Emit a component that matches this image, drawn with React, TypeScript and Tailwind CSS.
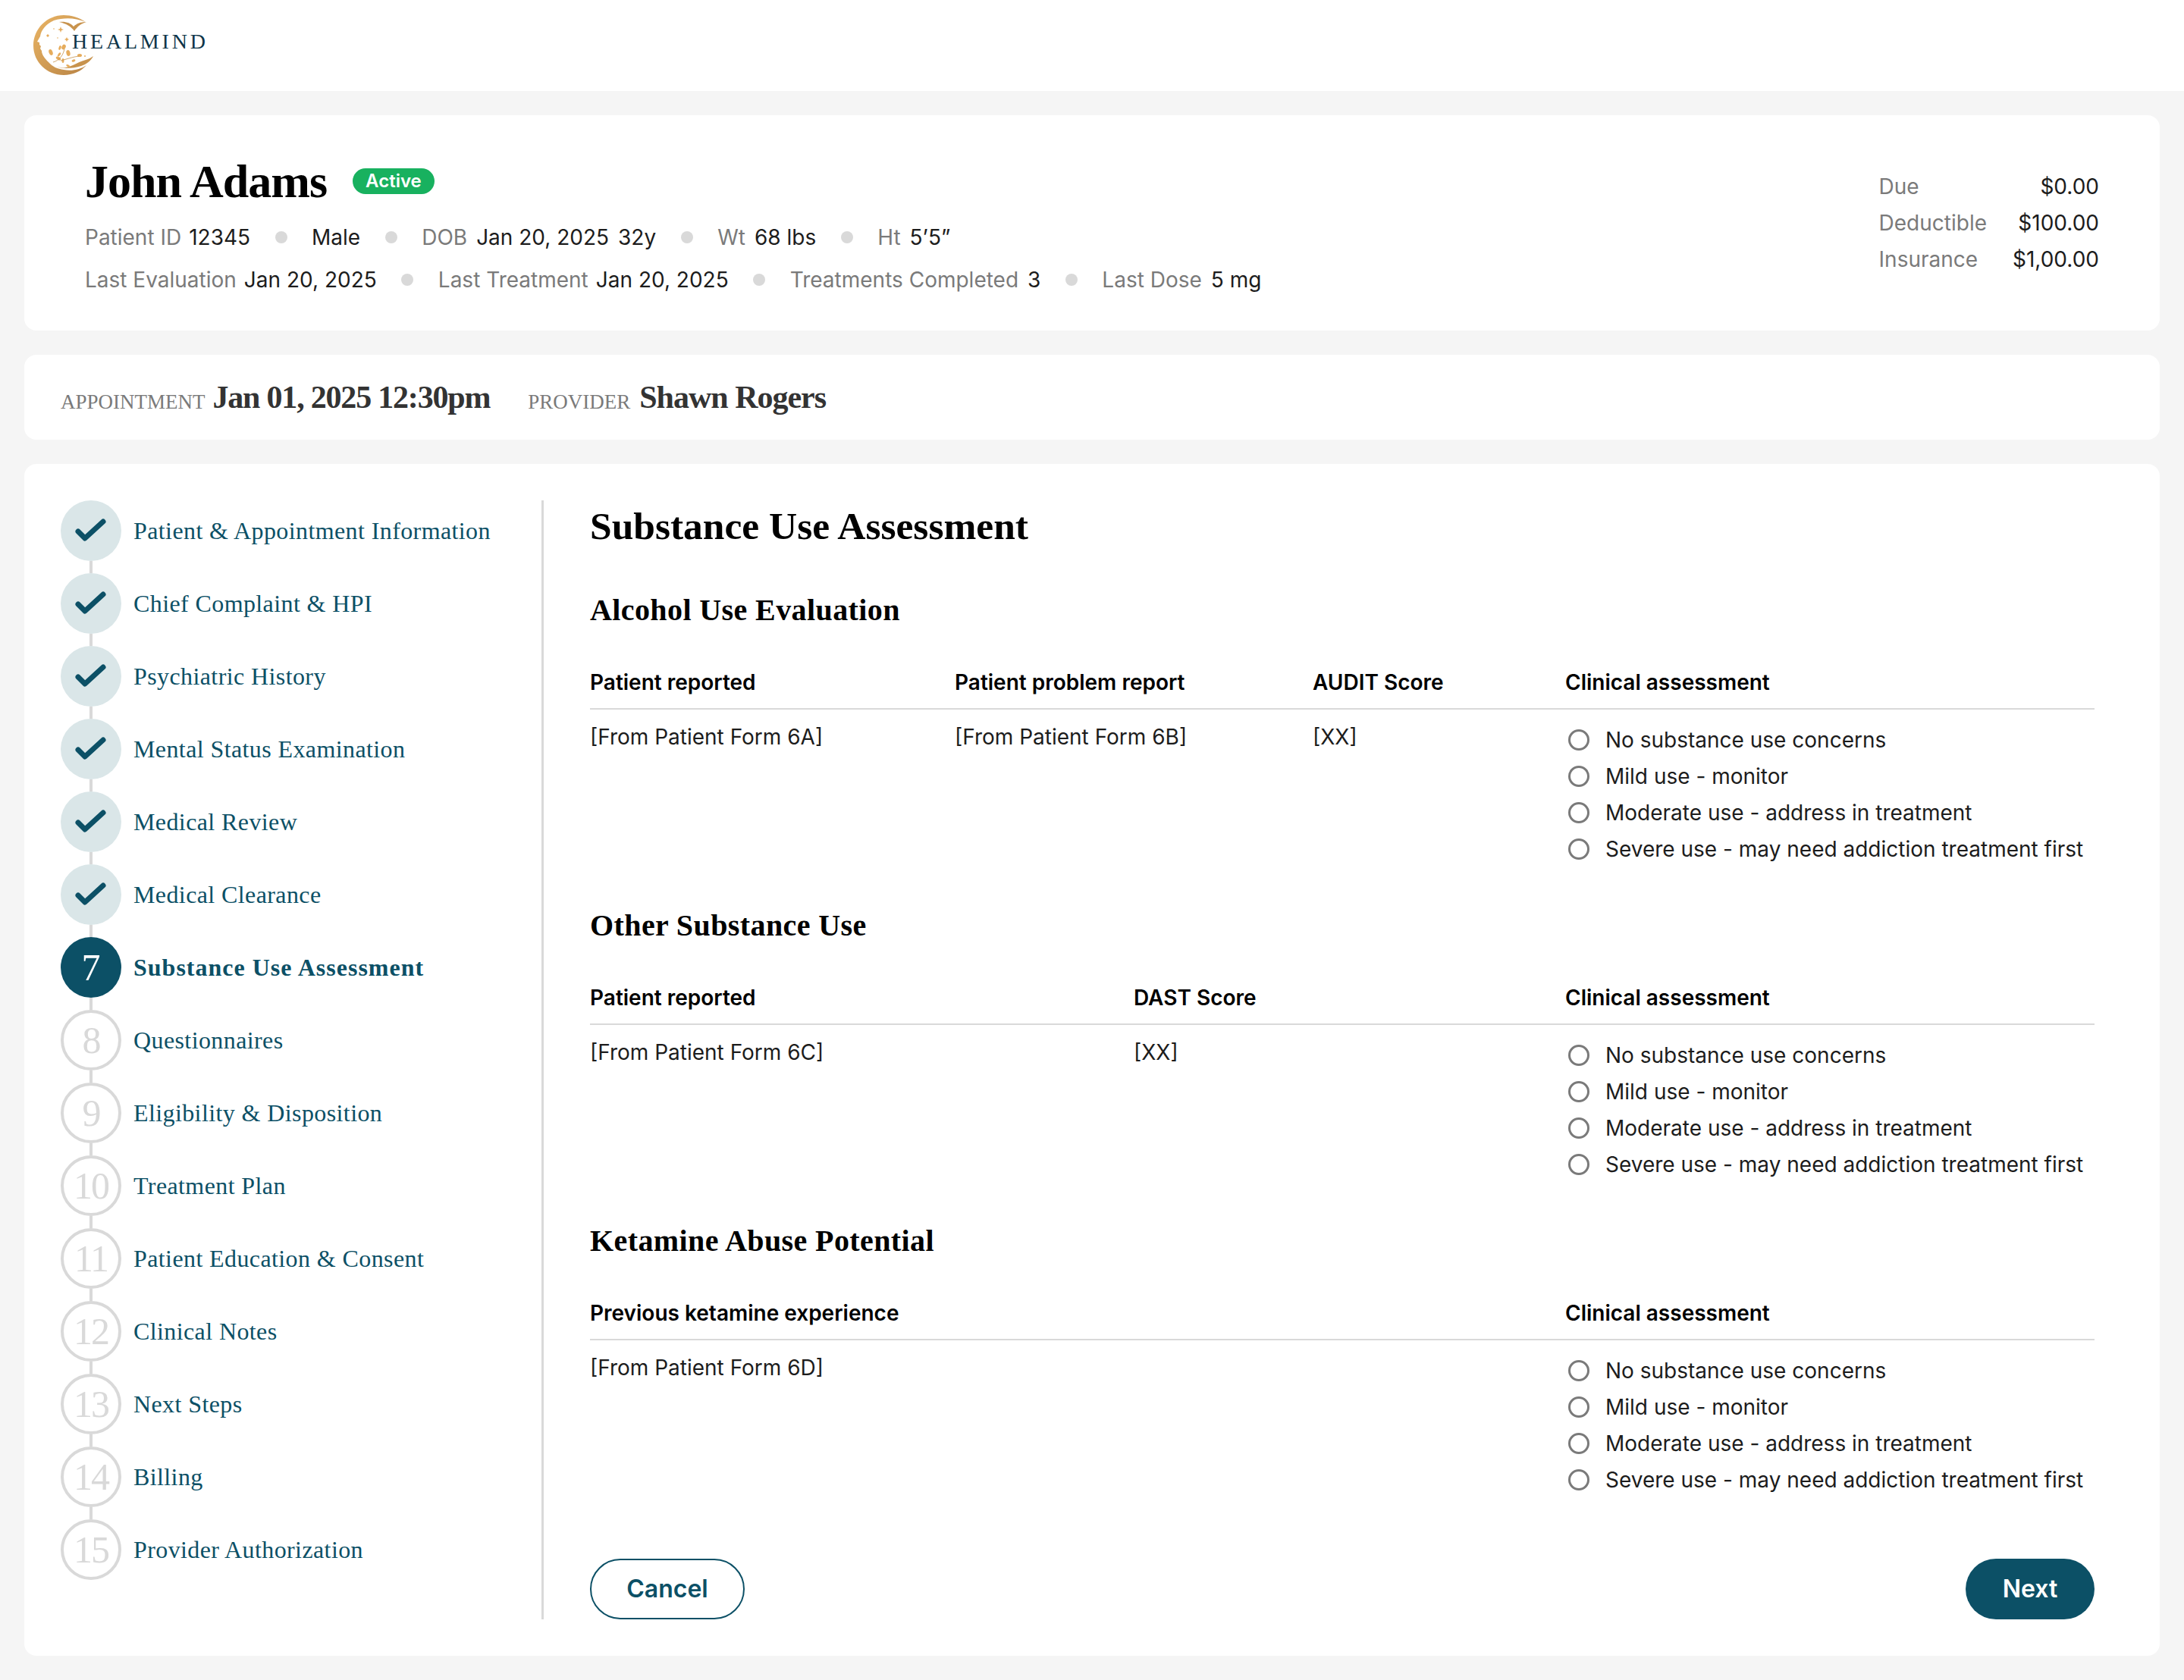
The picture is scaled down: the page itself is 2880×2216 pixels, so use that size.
const SERIF = "font-['Liberation_Serif',serif]";

const steps = [
  "Patient & Appointment Information",
  "Chief Complaint & HPI",
  "Psychiatric History",
  "Mental Status Examination",
  "Medical Review",
  "Medical Clearance",
  "Substance Use Assessment",
  "Questionnaires",
  "Eligibility & Disposition",
  "Treatment Plan",
  "Patient Education & Consent",
  "Clinical Notes",
  "Next Steps",
  "Billing",
  "Provider Authorization",
];

const ACTIVE_STEP = 7;

const assessmentOptions = [
  "No substance use concerns",
  "Mild use - monitor",
  "Moderate use - address in treatment",
  "Severe use - may need addiction treatment first",
];

const Logo = () => (
  <div className="relative w-[240px] h-[80px]">
    <svg width="84" height="84" viewBox="0 0 84 84" className="absolute left-0 top-0">
      <defs>
        <linearGradient id="gold" x1="0" y1="0" x2="1" y2="1">
          <stop offset="0" stopColor="#eab565" />
          <stop offset="1" stopColor="#b98445" />
        </linearGradient>
      </defs>
      {/* crescent with the face profile as its inner edge */}
      <path
        fill="url(#gold)"
        d="M69 9C60 3 50 0 40 0C18 0 0 18 0 40C0 62 18 79 40 79C52 79 63 74 70 66C62 72 50 74 40 72C32 71 25 68 20 62C15 57 11 52 11 47L9 44L10 41L8 39L8 36L5 35L9 28C10 20 16 12 27 7C40 3 55 3 69 9Z"
      />
      <path fill="#c8934d" d="M34 9C42 8 49 10 53 15C57 11 62 9 70 9C63 11 58 15 54 21C50 15 43 11 34 9Z" />
      {/* hand */}
      <path fill="#c8934d" d="M19 63C26 68 35 70 43 69C50 68 56 63 69 59C73 58 76 56 79 54C76 60 70 65 63 67C50 71 32 72 19 63Z" />
      {/* stars */}
      <path fill="#e6ac5c" d="M36 15L37 18L40 19L37 20L36 23L35 20L32 19L35 18Z" />
      <path fill="#e6ac5c" d="M44 29L45 31L47 32L45 33L44 35L43 33L41 32L43 31Z" />
      <path fill="#e6ac5c" d="M19 25L20 26L21 27L20 28L19 29L18 28L17 27L18 26Z" />
      <circle cx="27" cy="18" r="0.8" fill="#e6ac5c" />
      <circle cx="32" cy="30" r="0.8" fill="#e6ac5c" />
      {/* leaves */}
      <g fill="#e6ac5c">
        <ellipse cx="23" cy="49" rx="2.5" ry="4" transform="rotate(-20 23 49)" />
        <ellipse cx="35" cy="43" rx="1.5" ry="3" transform="rotate(20 35 43)" />
        <ellipse cx="40" cy="42" rx="2.5" ry="3.5" transform="rotate(30 40 42)" />
        <ellipse cx="46" cy="50" rx="2.5" ry="4" transform="rotate(-15 46 50)" />
        <ellipse cx="34" cy="52" rx="1.5" ry="3" transform="rotate(35 34 52)" />
        <ellipse cx="61" cy="53" rx="3" ry="2" />
        <ellipse cx="33" cy="57" rx="3.5" ry="2" transform="rotate(30 33 57)" />
        <ellipse cx="39" cy="60" rx="1.5" ry="3" />
        <ellipse cx="46" cy="67" rx="3" ry="1.5" transform="rotate(30 46 67)" />
        <ellipse cx="53" cy="60" rx="2.5" ry="1.5" transform="rotate(-20 53 60)" />
        <circle cx="68" cy="54" r="1" />
      </g>
      <path stroke="#c8934d" strokeWidth="0.8" fill="none" d="M26 62C34 60 40 52 41 44M36 60C44 58 52 55 60 54" />
    </svg>
    <span className={`absolute left-[51px] top-[20px] ${SERIF} text-[28px] leading-[30px] tracking-[3.8px] text-[#0e3549] whitespace-nowrap`}>
      HEALMIND
    </span>
  </div>
);

const Dot = () => <span className="w-4 h-4 rounded-full bg-[#d9d9d9] mx-[32.5px] shrink-0" />;

const Info = ({ label, value, gap = "ml-[10px]" }: { label?: string; value: string; gap?: string }) => (
  <span className="whitespace-nowrap">
    {label && <span className="text-[#7a7a7a]">{label}</span>}
    <span className={`text-[#1c1c1c] ${label ? gap : ""}`}>{value}</span>
  </span>
);

const PatientCard = () => (
  <div className="mx-8 h-[284px] bg-white rounded-2xl pl-20 pr-20 flex justify-between">
    <div>
      <div className="flex items-center h-[70px] mt-[52px]">
        <h1 className={`${SERIF} text-[62px] leading-[70px] font-bold text-black tracking-[-1px]`}>John Adams</h1>
        <span className="ml-[34px] px-[17px] h-[34px] leading-[34px] rounded-full bg-[#18b15f] text-white text-[24px] font-semibold">Active</span>
      </div>
      <div className="flex items-center h-[40px] mt-[19px] text-[28px]">
        <Info label="Patient ID" value="12345" />
        <Dot />
        <Info value="Male" />
        <Dot />
        <Info label="DOB" value="Jan 20, 2025" gap="ml-3" />
        <span className="ml-3 text-[#1c1c1c]">32y</span>
        <Dot />
        <Info label="Wt" value="68 lbs" gap="ml-3" />
        <Dot />
        <Info label="Ht" value="5’5”" gap="ml-3" />
      </div>
      <div className="flex items-center h-[40px] mt-[16px] text-[28px]">
        <Info label="Last Evaluation" value="Jan 20, 2025" />
        <Dot />
        <Info label="Last Treatment" value="Jan 20, 2025" />
        <Dot />
        <Info label="Treatments Completed" value="3" gap="ml-3" />
        <Dot />
        <Info label="Last Dose" value="5 mg" gap="ml-3" />
      </div>
    </div>
    <div className="mt-[74px] grid grid-cols-[auto_auto] gap-x-[34px] gap-y-2 h-max text-[28px] leading-[40px]">
      <span className="text-[#7a7a7a]">Due</span>
      <span className="text-right text-[#1c1c1c]">$0.00</span>
      <span className="text-[#7a7a7a]">Deductible</span>
      <span className="text-right text-[#1c1c1c]">$100.00</span>
      <span className="text-[#7a7a7a]">Insurance</span>
      <span className="text-right text-[#1c1c1c]">$1,00.00</span>
    </div>
  </div>
);

const AppointmentCard = () => (
  <div className={`mx-8 mt-8 h-[112px] bg-white rounded-2xl px-12 flex items-center ${SERIF}`}>
    <span className="text-[27px] text-[#7a7a7a] uppercase mt-[12px]">Appointment</span>
    <span className="ml-[10px] text-[42px] font-bold tracking-[-1.2px] text-[#333333]">Jan 01, 2025 12:30pm</span>
    <span className="ml-[50px] text-[27px] text-[#7a7a7a] uppercase mt-[12px]">Provider</span>
    <span className="ml-3 text-[42px] font-bold tracking-[-1px] text-[#333333]">Shawn Rogers</span>
  </div>
);

const StepBadge = ({ num }: { num: number }) => {
  if (num < ACTIVE_STEP) {
    return (
      <div className="w-20 h-20 rounded-full bg-[#dae6e8] flex items-center justify-center">
        <svg width="80" height="80" viewBox="0 0 80 80" fill="none">
          <path d="M23 41L32 50L56 28" stroke="#0c5066" strokeWidth="7" strokeLinecap="round" strokeLinejoin="round" />
        </svg>
      </div>
    );
  }
  if (num === ACTIVE_STEP) {
    return (
      <div className={`w-20 h-20 rounded-full bg-[#0c5066] flex items-center justify-center text-white text-[50px] ${SERIF}`}>
        {num}
      </div>
    );
  }
  return (
    <div className={`w-20 h-20 rounded-full border-4 border-[#d9d9d9] flex items-center justify-center text-[#d9d9d9] text-[50px] tracking-[-2px] ${SERIF}`}>
      {num}
    </div>
  );
};

const Stepper = () => (
  <div className="w-[637px] shrink-0 border-r-[3px] border-[#d9d9d9] h-[1476px]">
    {steps.map((label, i) => (
      <div key={label} className="flex gap-4">
        <div className="flex flex-col items-center">
          <StepBadge num={i + 1} />
          {i < steps.length - 1 && <div className="w-1 h-4 bg-[#d9d9d9]" />}
        </div>
        <div className={`h-20 flex items-center text-[32px] text-[#0c5066] whitespace-nowrap ${SERIF} ${i + 1 === ACTIVE_STEP ? "font-bold tracking-[1px]" : "tracking-[0.4px]"}`}>
          {label}
        </div>
      </div>
    ))}
  </div>
);

const ClinicalOptions = () => (
  <div className="flex flex-col mt-[-2px]">
    {assessmentOptions.map((o) => (
      <label key={o} className="flex items-center h-12 gap-[21px] pl-1 text-[28px] text-[#1c1c1c] whitespace-nowrap">
        <span className="w-7 h-7 rounded-full border-[3px] border-[#7a7a7a] shrink-0" />
        {o}
      </label>
    ))}
  </div>
);

const AssessmentTable = ({ title, cols, headers, values }: { title: string; cols: string; headers: string[]; values: string[] }) => (
  <section className="h-[416px]">
    <h2 className={`${SERIF} text-[40px] leading-[48px] font-bold tracking-[0.4px] text-black`}>{title}</h2>
    <div className={`grid ${cols} mt-[53px] pb-[16px] border-b-2 border-[#d9d9d9] text-[28px] leading-[36px] font-semibold text-black`}>
      {headers.map((h) => (
        <span key={h}>{h}</span>
      ))}
    </div>
    <div className={`grid ${cols} mt-[18px] text-[28px] leading-[36px] text-[#1c1c1c]`}>
      {values.map((v, i) => (
        <span key={i}>{v}</span>
      ))}
      <ClinicalOptions />
    </div>
  </section>
);

const AssessmentForm = () => (
  <div className="flex-1 pl-[61px] min-w-0 flex flex-col h-[1476px]">
    <h1 className={`${SERIF} text-[51.5px] leading-[60px] font-bold text-black mt-[4px]`}>Substance Use Assessment</h1>
    <div className="mt-[57px]">
      <AssessmentTable
        title="Alcohol Use Evaluation"
        cols="grid-cols-[481px_472px_333px_1fr]"
        headers={["Patient reported", "Patient problem report", "AUDIT Score", "Clinical assessment"]}
        values={["[From Patient Form 6A]", "[From Patient Form 6B]", "[XX]"]}
      />
      <AssessmentTable
        title="Other Substance Use"
        cols="grid-cols-[717px_569px_1fr]"
        headers={["Patient reported", "DAST Score", "Clinical assessment"]}
        values={["[From Patient Form 6C]", "[XX]"]}
      />
      <AssessmentTable
        title="Ketamine Abuse Potential"
        cols="grid-cols-[1286px_1fr]"
        headers={["Previous ketamine experience", "Clinical assessment"]}
        values={["[From Patient Form 6D]"]}
      />
    </div>
    <div className="mt-auto flex justify-between">
      <button className="h-20 w-[204px] rounded-full border-2 border-[#0c5066] text-[#0c5066] text-[32px] font-semibold">Cancel</button>
      <button className="h-20 w-[170px] rounded-full bg-[#0c5066] text-white text-[32px] font-semibold">Next</button>
    </div>
  </div>
);

export default function App() {
  return (
    <div className="min-h-[2216px] bg-[#f5f5f5] font-['Inter',sans-serif]">
      <header className="h-[120px] bg-white pl-11 pt-5">
        <Logo />
      </header>
      <div className="pt-8 pb-8">
        <PatientCard />
        <AppointmentCard />
        <div className="mx-8 mt-8 h-[1572px] bg-white rounded-2xl pl-12 pr-[86px] pt-12 flex">
          <Stepper />
          <AssessmentForm />
        </div>
      </div>
    </div>
  );
}
